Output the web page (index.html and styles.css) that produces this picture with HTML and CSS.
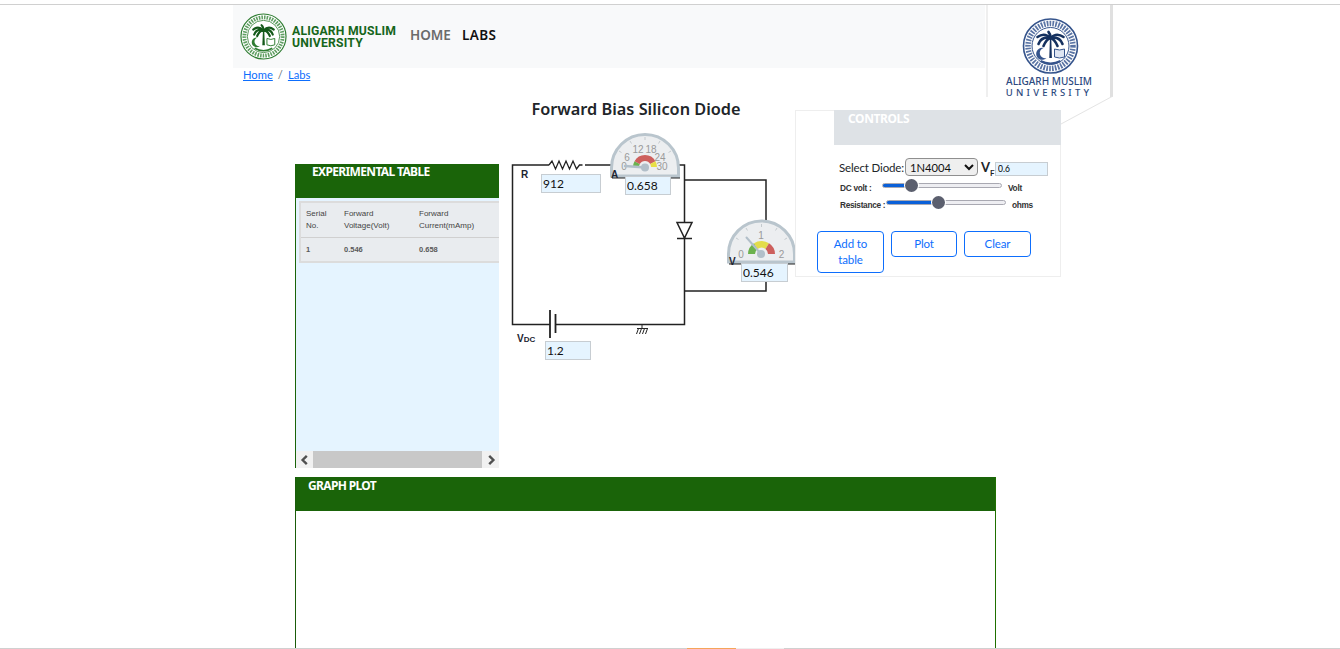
FILE: index.html
```html
<!DOCTYPE html>
<html lang="en">
<head>
<meta charset="utf-8">
<title>Forward Bias Silicon Diode</title>
<link rel="stylesheet" href="styles.css">
</head>
<body>
<div class="top-rule"></div>
<main class="lab">
  <header class="site-head">
    <svg class="seal-green" viewBox="0 0 48 48" aria-hidden="true">
      <circle cx="24" cy="24" r="23" fill="#fff" stroke="#2f7d32" stroke-width="1.2"/>
      <circle cx="24" cy="24" r="19.5" fill="none" stroke="#5f9e62" stroke-width="4" stroke-dasharray="1.6 1.1"/>
      <circle cx="24" cy="24" r="16.5" fill="#fff" stroke="#2f7d32" stroke-width=".8"/>
      <path d="M22.800 33 L23.400 19 H24.800 L25.400 33 Z" fill="#14591a"/>
      <g fill="none" stroke="#14591a" stroke-width="2.200" stroke-linecap="round">
        <path d="M24 18 Q19 12.500 13.500 17"/>
        <path d="M24 18 Q17 15.500 14.500 22"/>
        <path d="M24 18 Q20 17.500 17.500 23.500"/>
        <path d="M24 18 Q24 14 22 12.500"/>
        <path d="M24 18 Q29 12.500 34.500 17"/>
        <path d="M24 18 Q31 15.500 33.500 22"/>
        <path d="M24 18 Q28 17.500 30.500 23.500"/>
      </g>
      <path d="M18 25 a5 5 0 1 0 2.500 8.500 a4 4 0 1 1 -2.500 -8.500 Z" fill="#2f7d32"/>
      <path d="M27.500 26 l4 1 l4 -1 v6.500 l-4 1 l-4 -1 Z" fill="none" stroke="#2f7d32" stroke-width="1"/>
      <path d="M15 36 Q24 41 33 36" fill="none" stroke="#2f7d32" stroke-width="1.600"/>
    </svg>
    <div class="wordmark">ALIGARH MUSLIM<br>UNIVERSITY</div>
    <nav class="main-nav">
      <a class="nav-muted" href="#">HOME</a>
      <a class="nav-active" href="#">LABS</a>
    </nav>
  </header>
  <div class="crumbs"><a href="#">Home</a><span class="crumb-sep">/</span><a href="#">Labs</a></div>
  <h1 class="page-title">Forward Bias Silicon Diode</h1>

  <div class="bench">
    <section class="table-panel">
      <h2 class="band-title band-title-table">EXPERIMENTAL TABLE</h2>
      <div class="table-scroll">
        <table class="readings">
          <thead>
            <tr><th class="col-a">Serial<br>No.</th><th class="col-b">Forward<br>Voltage(Volt)</th><th class="col-c">Forward<br>Current(mAmp)</th></tr>
          </thead>
          <tbody>
            <tr><td>1</td><td>0.546</td><td>0.658</td></tr>
          </tbody>
        </table>
      </div>
      <div class="fake-scrollbar">
        <span class="scroll-btn">
          <svg viewBox="0 0 10 10" width="12" height="12"><path d="M6.500 1.500 L3 5 L6.500 8.500" fill="none" stroke="#505050" stroke-width="2"/></svg>
        </span>
        <span class="scroll-thumb"></span>
        <span class="scroll-btn">
          <svg viewBox="0 0 10 10" width="12" height="12"><path d="M3.500 1.500 L7 5 L3.500 8.500" fill="none" stroke="#505050" stroke-width="2"/></svg>
        </span>
      </div>
    </section>

    <section class="circuit">
      <svg class="circuit-svg" viewBox="505 125 295 240" width="295" height="240" aria-hidden="true">
        <g fill="none" stroke="#222" stroke-width="1.500">
          <path d="M549 165 H512.500 V324.500 H550"/>
          <path d="M585 165 H612"/>
          <path d="M549 165 l3 -4 l3.500 8 l3.500 -8 l3.500 8 l3.500 -8 l3.500 8 l3.500 -8 l3.500 8 l3 -4 h3" stroke-width="1.300"/>
          <path d="M678 165 H684.500 V324.500 H555.500"/>
          <path d="M684.500 180 H766 V222"/>
          <path d="M684.500 291 H766 V280"/>
          <path d="M677 222.500 H692 L684.500 238 Z" fill="#fff"/>
          <path d="M677 238.500 H692"/>
          <path d="M550 310 V338" stroke-width="1.800"/>
          <path d="M555.500 314 V333" stroke-width="1.800"/>
          <path d="M642 325 V328.500 M637 328.500 H648 M638.500 328.500 L636.500 334 M641.500 328.500 L639.500 334 M644.500 328.500 L642.500 334 M647.500 328.500 L645.500 334" stroke-width="1"/>
          <path d="M612 177.500 H680" stroke-width="2"/>
          <path d="M729 263.500 H796" stroke-width="2"/>
        </g>

        <path d="M611.500 176 V168 A33.500 33.500 0 0 1 678.500 168 V176 Z" fill="#eceef0" stroke="#b9c5cd" stroke-width="3"/>
        <g stroke="#c4cace" stroke-width="1" fill="none">
          <path d="M645 137 V140 M630 141 L631.500 143.500 M660 141 L658.500 143.500 M619 151 L621.500 152.500 M671 151 L668.500 152.500"/>
        </g>
        <path d="M633 167 A12 12 0 0 1 634.500 161.200 L639.800 164.100 A6 6 0 0 0 639 167 Z" fill="#6cb24e"/>
        <path d="M634.500 161.200 A12 12 0 0 1 655.500 161.200 L650.200 164.100 A6 6 0 0 0 639.800 164.100 Z" fill="#cd5f5c"/>
        <path d="M655.500 161.200 A12 12 0 0 1 657 167 L651 167 A6 6 0 0 0 650.200 164.100 Z" fill="#e8df45"/>
        <g class="dial-num">
          <text x="624" y="170">0</text><text x="627" y="160.500">6</text><text x="638" y="153">12</text><text x="651" y="153">18</text><text x="660" y="160.500">24</text><text x="662" y="170">30</text>
        </g>
        <path d="M645 167.500 L625 166" stroke="#b2bfc9" stroke-width="2.500" stroke-linecap="round"/>
        <circle cx="645" cy="167.500" r="4" fill="#b2bfc9"/>

        <path d="M728.500 262 V254 A33 33 0 0 1 794.500 254 V262 Z" fill="#eceef0" stroke="#b9c5cd" stroke-width="3"/>
        <path d="M796 254 V263" stroke="#222" stroke-width="1"/>
        <g stroke="#c4cace" stroke-width="1" fill="none">
          <path d="M761.500 224 V227 M746 228 L747.500 230.500 M777 228 L775.500 230.500 M736 238 L738.500 239.500 M787 238 L784.500 239.500"/>
        </g>
        <path d="M748 254 A13 13 0 0 1 754 243.300 L757.500 249 A6.500 6.500 0 0 0 755 254 Z" fill="#6cb24e"/>
        <path d="M754 243.300 A13 13 0 0 1 769 243.300 L765.500 249 A6.500 6.500 0 0 0 757.500 249 Z" fill="#e3dc4a"/>
        <path d="M769 243.300 A13 13 0 0 1 775 254 L768 254 A6.500 6.500 0 0 0 765.500 249 Z" fill="#cd5f5c"/>
        <g class="dial-num">
          <text x="741" y="257.500">0</text><text x="761" y="238.500">1</text><text x="781.500" y="257.500">2</text>
        </g>
        <path d="M761 254 L746.500 237.500" stroke="#b2bfc9" stroke-width="2" stroke-linecap="round"/>
        <circle cx="761" cy="254" r="4" fill="#b2bfc9"/>
      </svg>

      <span class="node-label label-r">R</span>
      <span class="node-label label-a">A</span>
      <span class="node-label label-v">V</span>
      <span class="node-label label-vdc">V<small>DC</small></span>
      <input class="cell-input input-r" value="912">
      <input class="cell-input input-a" value="0.658">
      <input class="cell-input input-v" value="0.546">
      <input class="cell-input input-vdc" value="1.2">
    </section>

    <section class="controls">
      <h2 class="controls-title">CONTROLS</h2>
      <div class="select-row">
        <label class="select-label" for="diode">Select Diode:</label>
        <select class="diode-select" id="diode"><option>1N4004</option></select>
        <span class="vf">V<sub>F</sub></span>
        <input class="vf-input" value="0.6">
      </div>
      <div class="slider-row slider-row-dc">
        <span class="slider-label">DC volt :</span>
        <input class="range range-dc" type="range" min="0" max="100" value="21">
        <span class="slider-unit">Volt</span>
      </div>
      <div class="slider-row slider-row-res">
        <span class="slider-label">Resistance :</span>
        <input class="range range-res" type="range" min="0" max="100" value="43">
        <span class="slider-unit">ohms</span>
      </div>
      <div class="actions">
        <button class="action action-wide">Add to table</button>
        <button class="action">Plot</button>
        <button class="action action-clear">Clear</button>
      </div>
    </section>
  </div>

  <section class="graph">
    <h2 class="band-title band-title-graph">GRAPH PLOT</h2>
  </section>
</main>
<div class="bottom-strip"><span class="strip-orange"></span><span class="strip-light"></span></div>

<aside class="badge">
  <svg class="badge-svg" viewBox="0 0 180 135" width="180" height="135" aria-hidden="true">
    <path d="M100 119 L152 91" stroke="#e4e4e4" stroke-width="1" fill="none"/>
    <g transform="translate(89.500 41)">
      <circle r="27" fill="#fff" stroke="#35548c" stroke-width="1.600"/>
      <circle r="22.500" fill="none" stroke="#5a74a4" stroke-width="5.500" stroke-dasharray="1.700 1.200"/>
      <circle r="18.500" fill="#fff" stroke="#35548c" stroke-width="1"/>
      <path d="M-1.200 12 L-.6 -7 H.8 L1.400 12 Z" fill="#15315f"/>
      <g fill="none" stroke="#15315f" stroke-width="2.600" stroke-linecap="round">
        <path d="M0 -8 Q-6 -14 -13 -9"/>
        <path d="M0 -8 Q-9 -10 -12 -2"/>
        <path d="M0 -8 Q-4 -7 -7 0"/>
        <path d="M0 -8 Q0 -12 -2 -14"/>
        <path d="M0 -8 Q6 -14 13 -9"/>
        <path d="M0 -8 Q9 -10 12 -2"/>
        <path d="M0 -8 Q4 -7 7 0"/>
      </g>
      <path d="M-7 2 a6 6 0 1 0 3 10 a5 5 0 1 1 -3 -10 Z" fill="#35548c"/>
      <path d="M4 3 l5 1 l5 -1 v8 l-5 1 l-5 -1 Z" fill="#dfe6f2" stroke="#35548c" stroke-width="1"/>
      <path d="M-10 15 Q0 20 10 15" fill="none" stroke="#35548c" stroke-width="2"/>
    </g>
  </svg>
  <div class="badge-line1">ALIGARH MUSLIM</div>
  <div class="badge-line2">UNIVERSITY</div>
</aside>
</body>
</html>
```
FILE: styles.css
```css
* { box-sizing: border-box; }
html, body { margin: 0; padding: 0; }
body {
  width: 1340px;
  height: 649px;
  overflow: hidden;
  display: flex;
  flex-direction: column;
  background: #fff;
  font-family: Lato, "Noto Sans", sans-serif;
  color: #212529;
}
.top-rule { flex: none; height: 5px; border-bottom: 1px solid #d0d0d0; }

.lab {
  flex: 1;
  min-height: 0;
  width: 827px;
  margin-left: 233px;
  display: flex;
  flex-direction: column;
}

.site-head {
  flex: none;
  width: 752px;
  height: 63px;
  background: #f8f9fa;
  display: flex;
  align-items: center;
  padding-left: 7px;
}
.seal-green { width: 47px; height: 47px; flex: none; }
.wordmark {
  margin-left: 5px;
  margin-top: 1px;
  width: 104px;
  flex: none;
  font-family: Roboto, sans-serif;
  font-size: 12.2px;
  line-height: 12px;
  font-weight: 700;
  letter-spacing: .2px;
  color: #16661b;
  white-space: nowrap;
}
.main-nav {
  display: flex;
  gap: 11px;
  margin-left: 14px;
  margin-top: -3px;
  font-family: "Noto Sans", sans-serif;
  font-size: 13.5px;
  font-weight: 600;
}
.main-nav a { text-decoration: none; }
.nav-muted { color: #6b6b6b; }
.nav-active { color: #111; letter-spacing: .4px; }

.crumbs {
  flex: none;
  height: 14px;
  padding-left: 10px;
  font-size: 11.2px;
  line-height: 14px;
}
.crumbs a { color: #0d6efd; }
.crumb-sep { margin: 0 5px; color: #6c757d; }

.page-title {
  flex: none;
  width: 806px;
  margin: 18px 0 46px;
  font-family: "Noto Sans", sans-serif;
  font-size: 16.3px;
  line-height: 18px;
  font-weight: 600;
  text-align: center;
  color: #212529;
}

.bench {
  flex: none;
  height: 303px;
  margin-left: 62px;
  display: flex;
  align-items: flex-start;
}

.band-title {
  margin: 0;
  background: #1a6409;
  color: #fff;
  font-family: "Noto Sans", sans-serif;
  font-size: 12px;
  font-weight: 700;
  letter-spacing: -.65px;
  height: 34px;
  line-height: 16px;
}
.band-title-table { padding-left: 16px; flex: none; }
.band-title-graph { padding-left: 12px; line-height: 18px; }

.table-panel {
  flex: none;
  width: 204px;
  height: 304px;
  display: flex;
  flex-direction: column;
  background: #e5f4ff;
  border-left: 1px solid #1a6409;
}
.table-scroll { flex: 1; min-height: 0; overflow: hidden; padding: 3px 0 0 3px; }
.readings {
  width: 240px;
  border-collapse: collapse;
  background: #e9ecef;
  border: 2px solid #dcdcdc;
  border-right: 0;
  font-family: "Liberation Sans", sans-serif;
  font-size: 8px;
  color: #444;
  table-layout: fixed;
}
.readings th { height: 35px; font-weight: 400; text-align: left; line-height: 12px; padding: 1px 0 0 5px; border-bottom: 1px solid #d0d0d0; }
.readings td { height: 25px; font-size: 7.500px; font-weight: 700; color: #5a5a5a; padding: 0 0 0 5px; }
.col-a { width: 39px; }
.col-b { width: 75px; }
.fake-scrollbar { flex: none; height: 17px; display: flex; background: #f1f1f1; }
.scroll-btn { flex: none; width: 17px; display: flex; align-items: center; justify-content: center; }
.scroll-thumb { flex: 1; background: #c8c8c8; }

.circuit {
  flex: none;
  position: relative;
  width: 290px;
  height: 240px;
  margin: -39px 0 0 6px;
}
.circuit-svg { position: absolute; left: 0; top: 0; overflow: visible; }
.dial-num { font-family: "Liberation Sans", sans-serif; font-size: 10px; fill: #9a9a9a; text-anchor: middle; }
.node-label {
  position: absolute;
  font-family: "Liberation Sans", sans-serif;
  font-size: 10px;
  line-height: 10px;
  font-weight: 700;
  color: #1c2430;
}
.node-label small { font-size: 8px; }
.label-r { left: 16px; top: 45px; }
.label-a { left: 106px; top: 45px; }
.label-v { left: 224px; top: 132px; }
.label-vdc { left: 12px; top: 209px; }
.cell-input {
  position: absolute;
  height: 19px;
  padding: 0 1px;
  border: 1px solid #c7cdd2;
  background: #e5f4ff;
  font-family: Lato, "Noto Sans", sans-serif;
  font-size: 12px;
  color: #111;
}
.input-r { left: 36px; top: 49px; width: 60px; }
.input-a { left: 120px; top: 51px; width: 46px; }
.input-v { left: 236px; top: 138px; width: 47px; }
.input-vdc { left: 40px; top: 216px; width: 46px; }

.controls {
  flex: none;
  width: 266px;
  height: 167px;
  margin-top: -54px;
  border: 1px solid #eeeeee;
  background: #fff;
  position: relative;
}
.controls-title {
  margin: -1px -1px 0 38px;
  height: 35px;
  padding-left: 14px;
  background: #dee2e6;
  color: #fff;
  font-family: "Noto Sans", sans-serif;
  font-size: 12px;
  line-height: 18px;
  font-weight: 700;
  letter-spacing: -.4px;
}
.select-row {
  display: flex;
  align-items: center;
  height: 18px;
  margin: 13px 0 0 43px;
  font-size: 11.500px;
  letter-spacing: -.15px;
}
.select-label { width: 66px; flex: none; white-space: nowrap; }
.diode-select {
  flex: none;
  width: 73px;
  height: 18px;
  font-family: Lato, "Noto Sans", sans-serif;
  font-size: 11.200px;
  letter-spacing: 0;
  padding: 0;
  background: #efefef;
  border: 1px solid #8f8f8f;
  border-radius: 4px;
  color: #111;
}
.vf { margin-left: 3px; width: 14px; flex: none; font-weight: 700; font-size: 13px; line-height: 13px; }
.vf sub { font-size: 8px; line-height: 0; }
.vf-input {
  width: 53px;
  height: 14px;
  margin-top: 4px;
  padding: 0 2px;
  border: 1px solid #c7cdd2;
  background: #e5f4ff;
  font-family: Lato, "Noto Sans", sans-serif;
  font-size: 8.500px;
}
.slider-row { position: relative; margin-left: 44px; height: 17px; display: flex; align-items: center; }
.slider-row-dc { margin-top: 1px; }
.slider-label, .slider-unit {
  font-family: "Liberation Sans", sans-serif;
  font-size: 8.300px;
  font-weight: 700;
  letter-spacing: -.3px;
  color: #333;
  white-space: nowrap;
}
.slider-label { width: 42px; flex: none; margin-top: 5px; }
.slider-row-res .slider-label { width: 46px; }
.slider-unit { margin: 5px 0 0 6px; }
.range {
  -webkit-appearance: none;
  appearance: none;
  flex: none;
  width: 120px;
  height: 13px;
  margin: 0;
  background: transparent;
}
.range::-webkit-slider-runnable-track {
  height: 5px;
  border-radius: 3px;
  border: 1px solid #a9a9b2;
  background: #eeeef2;
}
.range-dc::-webkit-slider-runnable-track { background: linear-gradient(to right, #0a60d8 24%, #eeeef2 24%); }
.range-res::-webkit-slider-runnable-track { background: linear-gradient(to right, #0a60d8 43%, #eeeef2 43%); }
.range::-webkit-slider-thumb {
  -webkit-appearance: none;
  appearance: none;
  width: 13px;
  height: 13px;
  margin-top: -5px;
  border-radius: 50%;
  background: #5b5f6e;
  box-shadow: 0 0 0 1px #fff;
}
.actions {
  display: flex;
  align-items: flex-start;
  gap: 7px;
  margin: 20px 0 0 21px;
}
.action {
  flex: none;
  width: 66px;
  height: 26px;
  padding: 0 6px;
  border: 1px solid #0d6efd;
  border-radius: 4px;
  background: #fff;
  color: #0d6efd;
  font-family: Lato, "Noto Sans", sans-serif;
  font-size: 11.500px;
  letter-spacing: -.1px;
  line-height: 16px;
}
.action-wide { width: 67px; height: 42px; }
.action-clear { width: 67px; }

.graph {
  flex: 1;
  min-height: 0;
  width: 701px;
  margin: 10px 0 0 62px;
  border-left: 1px solid #1a5c0a;
  border-right: 1px solid #1f7000;
}

.bottom-strip {
  flex: none;
  height: 1px;
  background: #d0d0d0;
  display: flex;
  padding-left: 687px;
}
.strip-orange { width: 49px; background: #f5a55a; }
.strip-light { width: 48px; background: #efefef; }

.badge {
  position: absolute;
  left: 986px;
  top: 5px;
  width: 127px;
  height: 92px;
  background: #fff;
  border-left: 2px solid #efefef;
  border-right: 3px solid #e0e0e0;
  text-align: center;
  color: #2d4a80;
  font-family: "Noto Sans", sans-serif;
}
.badge-svg { position: absolute; left: -27px; top: 0; overflow: visible; }
.badge-line1 { position: absolute; left: 0; right: 0; top: 70px; font-size: 10px; line-height: 12px; font-weight: 500; white-space: nowrap; }
.badge-line2 { position: absolute; left: 0; right: 0; top: 82px; font-size: 9.500px; line-height: 12px; font-weight: 500; letter-spacing: 3.200px; white-space: nowrap; }
```
